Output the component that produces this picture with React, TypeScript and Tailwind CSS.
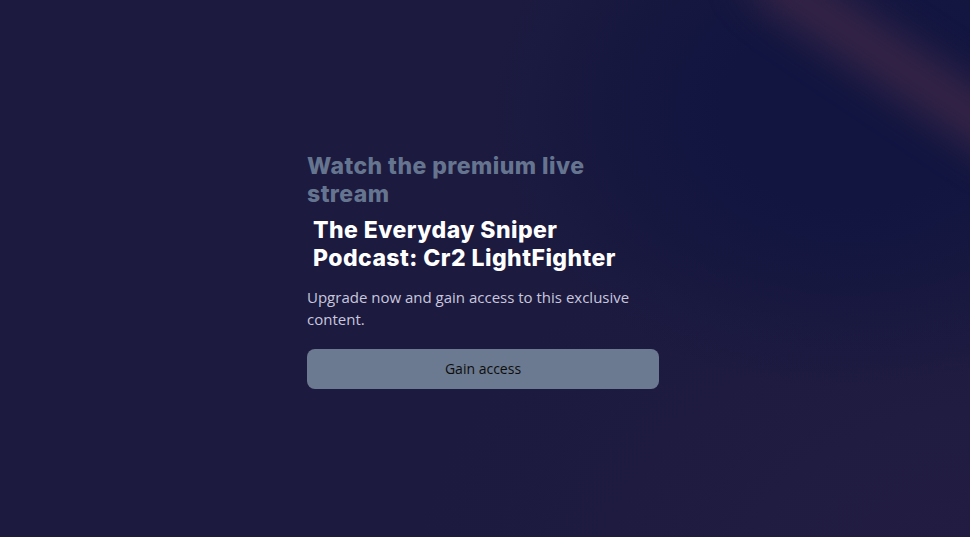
export default function App() {
  return (
    <div className="relative flex h-[537px] w-full items-center justify-center overflow-hidden bg-[#1c1a3f] bg-[radial-gradient(ellipse_360px_280px_at_850px_110px,#111540_0%,#111540_35%,transparent_100%),radial-gradient(ellipse_600px_400px_at_1000px_580px,#231c42_0%,transparent_100%)] pr-[4px] pt-[3px]">
      <div className="pointer-events-none absolute left-[725px] top-[38px] h-[50px] w-[340px] rotate-[34deg] rounded-full bg-[#3d2747] opacity-90 blur-[20px]" />
      <div className="relative w-[352px]">
        <h2 className="max-w-[300px] font-['Inter',sans-serif] text-[23px] font-extrabold leading-[28px] tracking-[0.45px] text-[#66758f]">
          Watch the premium live stream
        </h2>
        <h1 className="mt-[8px] max-w-[335px] px-[6px] font-['Inter',sans-serif] text-[23px] font-extrabold leading-[28px] tracking-[0.45px] text-white">
          The Everyday Sniper Podcast: Cr2 LightFighter
        </h1>
        <p className="mt-[14px] font-['Open_Sans',sans-serif] text-[15px] leading-[22px] text-[#c9c7de]">
          Upgrade now and gain access to this exclusive content.
        </p>
        <button className="mt-[19px] h-[40px] w-full rounded-[8px] bg-[#6b7a90] font-['Open_Sans',sans-serif] text-[14px] text-[#0d0d0d]">
          Gain access
        </button>
      </div>
    </div>
  );
}
